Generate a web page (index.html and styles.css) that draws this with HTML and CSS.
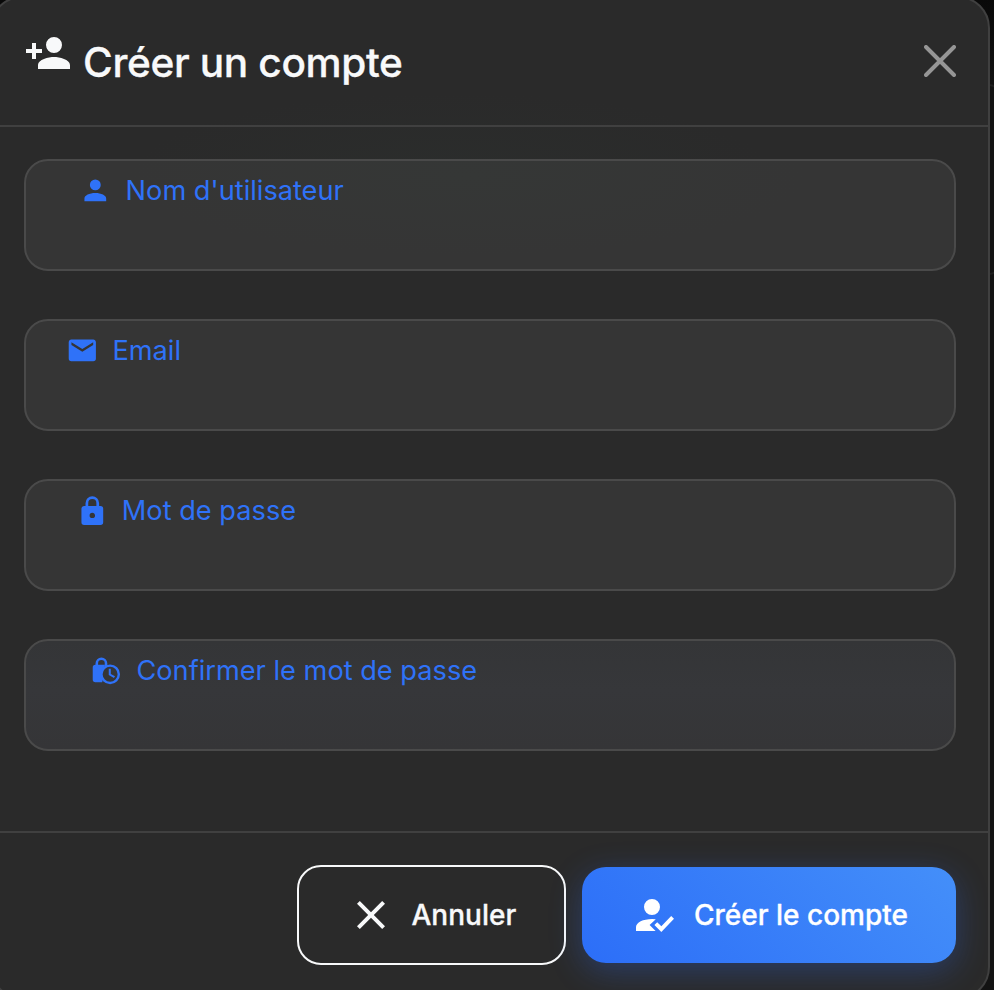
FILE: index.html
```html
<!DOCTYPE html>
<html lang="fr">
<head>
<meta charset="utf-8">
<title>Créer un compte</title>
<link rel="stylesheet" href="styles.css">
</head>
<body>
<div class="backdrop-card"></div>
<div class="modal">
  <header class="modal-header">
    <svg class="icon-title" viewBox="0 0 24 24"><path d="M15,14C12.33,14 7,15.33 7,18V20H23V18C23,15.33 17.67,14 15,14M6,10V7H4V10H1V12H4V15H6V12H9V10M15,12A4,4 0 0,0 19,8A4,4 0 0,0 15,4A4,4 0 0,0 11,8A4,4 0 0,0 15,12Z"/></svg>
    <h1 class="title">Créer un compte</h1>
    <svg class="close" viewBox="0 0 32 32"><path d="M2 2L30 30M30 2L2 30"/></svg>
  </header>
  <main class="modal-body">
    <div class="field field-user">
      <svg class="icon" viewBox="0 0 24 24"><path d="M12,4A4,4 0 0,1 16,8A4,4 0 0,1 12,12A4,4 0 0,1 8,8A4,4 0 0,1 12,4M12,14C16.42,14 20,15.79 20,18V20H4V18C4,15.79 7.58,14 12,14Z"/></svg>
      <label class="label">Nom d'utilisateur</label>
    </div>
    <div class="field field-email">
      <svg class="icon" viewBox="0 0 24 24"><path d="M20,8L12,13L4,8V6L12,11L20,6M20,4H4C2.89,4 2,4.89 2,6V18A2,2 0 0,0 4,20H20A2,2 0 0,0 22,18V6C22,4.89 21.1,4 20,4Z"/></svg>
      <label class="label">Email</label>
    </div>
    <div class="field field-password">
      <svg class="icon" viewBox="0 0 24 24"><path fill-rule="evenodd" d="M12,17A2,2 0 0,0 14,15C14,13.89 13.1,13 12,13A2,2 0 0,0 10,15A2,2 0 0,0 12,17M18,8A2,2 0 0,1 20,10V20A2,2 0 0,1 18,22H6A2,2 0 0,1 4,20V10C4,8.89 4.9,8 6,8H7V6A5,5 0 0,1 12,1A5,5 0 0,1 17,6V8H18M12,3A3,3 0 0,0 9,6V8H15V6A3,3 0 0,0 12,3Z"/></svg>
      <label class="label">Mot de passe</label>
    </div>
    <div class="field field-confirm">
      <svg class="icon" viewBox="0 0 24 24">
        <path d="M4,7.2H11L9,20H4A2,2 0 0 1 2,18V9.2A2,2 0 0 1 4,7.2Z"/>
        <path class="shackle" d="M5,8.5V6.2A3.4,3.4 0 0 1 11.8,6.2V8.5"/>
        <circle class="dial" cx="14.8" cy="14.2" r="6.4"/>
        <path d="M13.8,10.2H15.3V13.9L18.4,15.6L17.6,16.9L13.8,14.7Z"/>
      </svg>
      <label class="label">Confirmer le mot de passe</label>
    </div>
  </main>
  <footer class="modal-footer">
    <button class="btn btn-cancel">
      <svg class="btn-icon" viewBox="0 0 24 24"><path d="M19,6.41L17.59,5L12,10.59L6.41,5L5,6.41L10.59,12L5,17.59L6.41,19L12,13.41L17.59,19L19,17.59L13.41,12L19,6.41Z"/></svg>
      <span>Annuler</span>
    </button>
    <button class="btn btn-create">
      <svg class="btn-icon" viewBox="0 0 24 24"><path d="M20.6,12.5L22,13.91L15.67,20.5L12.2,17L13.6,15.59L15.67,17.67L20.6,12.5M9.8,17L12.8,20H3V18C3,15.79 6.58,14 11,14L12.89,14.11L9.8,17M11,4A4,4 0 0,1 15,8A4,4 0 0,1 11,12A4,4 0 0,1 7,8A4,4 0 0,1 11,4Z"/></svg>
      <span>Créer le compte</span>
    </button>
  </footer>
</div>
</body>
</html>
```

FILE: styles.css
```css
* { box-sizing: border-box; }
html, body { height: 100%; overflow: hidden; }
body {
  margin: 0;
  background: linear-gradient(#090909, #131313 90px, #131313);
  font-family: Inter, "Liberation Sans", sans-serif;
  color: #f8f9fa;
}
svg { display: block; flex: none; fill: currentColor; }
/* Page card dimmed behind the dialog */
.backdrop-card {
  position: absolute;
  top: 84px;
  left: 0;
  width: 1004px;
  height: 191px;
  border: 2px solid #202020;
  border-radius: 16px;
}
.modal {
  position: relative;
  width: 1000px;
  height: 1003px;
  margin: -4px 0 0 -10px;
  border: 2px solid #404040;
  border-radius: 32px;
  background: radial-gradient(ellipse 320px 80px at 460px 175px, #2b2d2c, #2a2a2a);
  display: flex;
  flex-direction: column;
  overflow: hidden;
}
.modal-header {
  height: 129px;
  flex: none;
  border-bottom: 2px solid #404040;
  padding: 0 32px 2px;
  display: flex;
  align-items: center;
}
.icon-title { width: 48px; height: 48px; margin-top: -16px; }
.title {
  margin: 4px auto 0 11px;
  font-size: 40.6px;
  font-weight: 500;
  line-height: 48px;
  letter-spacing: -.35px;
  white-space: nowrap;
  -webkit-text-stroke: .3px currentColor;
}
.close { width: 32px; height: 32px; fill: none; stroke: #969696; stroke-width: 4; stroke-linecap: round; }
.modal-body {
  flex: 1;
  padding: 32px;
  display: flex;
  flex-direction: column;
  gap: 48px;
}
.field {
  height: 112px;
  flex: none;
  border: 2px solid #4a4a4a;
  border-radius: 24px;
  background: #353535;
  color: #2f72f8;
  padding-top: 13px;
  display: flex;
  align-items: flex-start;
}
.field-user { padding-left: 53.4px; background: radial-gradient(ellipse 340px 80px at 440px 15px, #353736, #353535); }
.field-email { padding-left: 40.2px; }
.field-password { padding-left: 49.6px; }
.field-confirm { padding-left: 64.2px; background: linear-gradient(#343537, #36373a 45%, #353537); }
.icon { width: 32.64px; height: 32.64px; }
.field-password .icon, .field-confirm .icon { margin-top: .5px; }
.shackle { fill: none; stroke: currentColor; stroke-width: 1.9; }
.dial { fill: #353638; stroke: currentColor; stroke-width: 1.8; }
.label { margin-left: 13.6px; font-size: 27.2px; line-height: 33px; white-space: nowrap; }
.modal-footer {
  height: 166px;
  flex: none;
  border-top: 2px solid #404040;
  padding: 0 32px;
  display: flex;
  justify-content: flex-end;
  align-items: center;
  gap: 16px;
}
.btn {
  border: 0;
  border-radius: 24px;
  padding: 0 48px;
  display: flex;
  align-items: center;
  gap: 16px;
  font: 500 28px/33px Inter, "Liberation Sans", sans-serif;
  -webkit-text-stroke: .3px currentColor;
  color: #f8f9fa;
  white-space: nowrap;
}
.btn-icon { width: 48px; height: 48px; }
.btn-cancel { width: 269px; height: 100px; gap: 16.5px; border: 2px solid #f8f9fa; background: transparent; }
.btn-create {
  width: 374px;
  height: 96px;
  color: #fff;
  background: linear-gradient(45deg, #2c6ef8, #448ff9);
  box-shadow: 0 8px 32px rgba(45, 110, 248, .3);
}
```
